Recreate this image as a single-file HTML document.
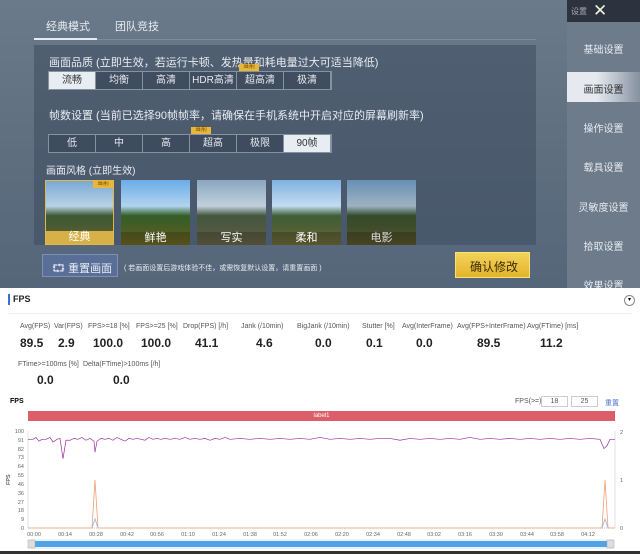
<!DOCTYPE html>
<html><head><meta charset="utf-8"><style>
*{margin:0;padding:0;box-sizing:border-box}
body{width:640px;height:554px;overflow:hidden;background:#fff;font-family:"Liberation Sans","Noto Sans CJK SC",sans-serif;position:relative}
.a{position:absolute}
.game{left:0;top:0;width:640px;height:288px;background:linear-gradient(180deg,#6b7a8a 0%,#5f6f80 50%,#56667a 100%);overflow:hidden}
.panel{left:34px;top:45px;width:502px;height:200px;background:rgba(60,75,95,0.55)}
.w{color:#e8ecf2;font-size:11px;white-space:nowrap}
.seg{display:flex;position:absolute;border:1px solid #8592a2}
.seg div{width:47px;height:17px;border-right:1px solid #8592a2;color:#e6eaf0;font-size:10px;text-align:center;line-height:17px;background:rgba(50,62,80,0.5)}
.seg div.on{background:#e8edf3;color:#333}
.tag{position:absolute;background:#e8b63a;font-size:6px;width:20px;height:7px;line-height:7px;text-align:center;color:#6b4a00}
.th{position:absolute;top:180px;width:69px;height:65px;background:linear-gradient(180deg,#7aa9d4 0%,#b9d2e5 40%,#3c5a34 55%,#4a5a32 72%,#6b6434 100%);overflow:hidden}
.th span{position:absolute;bottom:0;left:0;right:0;text-align:center;color:#fff;font-size:11px;line-height:13px;background:rgba(0,0,0,0.2)}
.side{left:567px;top:0;width:73px;height:288px;background:#6d7b8b}
.side .it{position:absolute;left:0;width:73px;text-align:center;color:#e6ebf1;font-size:10px}
.lb{font-size:7px;color:#555;white-space:nowrap}
.vl{font-size:12px;color:#222;font-weight:bold;white-space:nowrap}
</style></head><body>
<div class="a game">
  <div class="a w" style="left:46px;top:18px;font-size:11px">经典模式</div>
  <div class="a" style="left:34px;top:38px;width:63px;height:2px;background:#e6ebf1"></div>
  <div class="a w" style="left:115px;top:18px;font-size:11px">团队竞技</div>
  <div class="a" style="left:97px;top:39px;width:439px;height:1px;background:#7e8b9a"></div>
  <div class="a panel"></div>
  <div class="a w" style="left:49px;top:54px">画面品质 (立即生效，若运行卡顿、发热量和耗电量过大可适当降低)</div>
  <div class="seg" style="left:48px;top:71px"><div class="on">流畅</div><div>均衡</div><div>高清</div><div>HDR高清</div><div>超高清</div><div>极清</div></div>
  <div class="tag" style="left:239px;top:64px">当前</div>
  <div class="a w" style="left:49px;top:107px">帧数设置 (当前已选择90帧帧率，请确保在手机系统中开启对应的屏幕刷新率)</div>
  <div class="seg" style="left:48px;top:134px"><div>低</div><div>中</div><div>高</div><div>超高</div><div>极限</div><div class="on">90帧</div></div>
  <div class="tag" style="left:191px;top:127px">当前</div>
  <div class="a w" style="left:46px;top:162px;font-size:10px">画面风格 (立即生效)</div>
  <div class="th" style="left:45px;border:1px solid #e0b84a"><span style="background:#d8b048">经典</span><div class="tag" style="right:0;top:0">当前</div></div>
  <div class="th" style="left:121px;filter:saturate(1.4)"><span>鲜艳</span></div>
  <div class="th" style="left:197px;filter:saturate(0.6)"><span>写实</span></div>
  <div class="th" style="left:272px;filter:brightness(1.05)"><span>柔和</span></div>
  <div class="th" style="left:347px;filter:brightness(0.85)"><span>电影</span></div>
  <div class="a" style="left:42px;top:254px;width:76px;height:23px;background:#5a6f98;border:1px solid #7d8fb5"></div>
  <div class="a w" style="left:52px;top:260px;font-size:11px">⮔ 重置画面</div>
  <div class="a w" style="left:124px;top:263px;font-size:7px">( 若画面设置后游戏体验不佳，或需恢复默认设置，请重置画面 )</div>
  <div class="a" style="left:455px;top:252px;width:75px;height:26px;background:linear-gradient(#f3d35a,#e3b42c);border:1px solid #f7e27a"></div>
  <div class="a" style="left:470px;top:258px;font-size:12px;color:#3a2c00">确认修改</div>
  <div class="a side">
    <div class="a" style="left:0;top:0;width:73px;height:22px;background:#2c333e"></div>
    <div class="a" style="left:4px;top:6px;color:#aab;font-size:8px">设置</div>
    <div class="a" style="left:26px;top:1px;color:#f2f0e0;font-size:17px">✕</div>
    <div class="a" style="left:0;top:72px;width:73px;height:30px;background:linear-gradient(90deg,#e6eaf0 40%,rgba(230,234,240,0.2))"></div>
    <div class="it" style="top:41px">基础设置</div>
    <div class="it" style="top:81px;color:#333">画面设置</div>
    <div class="it" style="top:120px">操作设置</div>
    <div class="it" style="top:159px">载具设置</div>
    <div class="it" style="top:199px">灵敏度设置</div>
    <div class="it" style="top:238px">拾取设置</div>
    <div class="it" style="top:277px">效果设置</div>
  </div>
</div>
<div class="a" style="left:8px;top:294px;width:2px;height:11px;background:#3b6fd6"></div>
<div class="a" style="left:13px;top:294px;font-size:9px;font-weight:bold;color:#222">FPS</div>
<div class="a" style="left:624px;top:295px;width:11px;height:11px;border:1px solid #888;border-radius:50%;font-size:6px;text-align:center;line-height:9px">▾</div>
<div class="a" style="left:8px;top:313px;width:624px;height:1px;background:#eee"></div>
<div class="lb a" style="left:20px;top:323px">Avg(FPS)</div><div class="vl a" style="left:20px;top:336px">89.5</div>
<div class="lb a" style="left:54px;top:323px">Var(FPS)</div><div class="vl a" style="left:58px;top:336px">2.9</div>
<div class="lb a" style="left:88px;top:323px">FPS>=18 [%]</div><div class="vl a" style="left:93px;top:336px">100.0</div>
<div class="lb a" style="left:136px;top:323px">FPS>=25 [%]</div><div class="vl a" style="left:141px;top:336px">100.0</div>
<div class="lb a" style="left:183px;top:323px">Drop(FPS) [/h]</div><div class="vl a" style="left:195px;top:336px">41.1</div>
<div class="lb a" style="left:241px;top:323px">Jank (/10min)</div><div class="vl a" style="left:256px;top:336px">4.6</div>
<div class="lb a" style="left:297px;top:323px">BigJank (/10min)</div><div class="vl a" style="left:315px;top:336px">0.0</div>
<div class="lb a" style="left:362px;top:323px">Stutter [%]</div><div class="vl a" style="left:366px;top:336px">0.1</div>
<div class="lb a" style="left:402px;top:323px">Avg(InterFrame)</div><div class="vl a" style="left:416px;top:336px">0.0</div>
<div class="lb a" style="left:457px;top:323px">Avg(FPS+InterFrame)</div><div class="vl a" style="left:477px;top:336px">89.5</div>
<div class="lb a" style="left:527px;top:323px">Avg(FTime) [ms]</div><div class="vl a" style="left:540px;top:336px">11.2</div>
<div class="lb a" style="left:18px;top:361px">FTime>=100ms [%]</div><div class="vl a" style="left:37px;top:373px">0.0</div>
<div class="lb a" style="left:83px;top:361px">Delta(FTime)>100ms [/h]</div><div class="vl a" style="left:113px;top:373px">0.0</div>
<div class="a" style="left:10px;top:398px;font-size:7px;font-weight:bold">FPS</div>
<div class="lb a" style="left:515px;top:398px">FPS(>=)</div>
<div class="a" style="left:541px;top:396px;width:27px;height:11px;border:1px solid #ccc;font-size:7px;text-align:center;line-height:9px;color:#555">18</div>
<div class="a" style="left:571px;top:396px;width:27px;height:11px;border:1px solid #ccc;font-size:7px;text-align:center;line-height:9px;color:#555">25</div>
<div class="a" style="left:605px;top:398px;font-size:7px;color:#4a6fd0">重置</div>
<div class="a" style="left:28px;top:411px;width:587px;height:10px;background:#dc5e68;color:#fff;font-size:6px;text-align:center;line-height:10px">label1</div>
<svg class="a" style="left:0;top:425px" width="640" height="129" font-family="Liberation Sans" font-size="5.5" fill="#666">
<g text-anchor="end">
<text x="24" y="8">100</text><text x="24" y="17">91</text><text x="24" y="26">82</text><text x="24" y="34">73</text><text x="24" y="43">64</text><text x="24" y="52">55</text><text x="24" y="61">46</text><text x="24" y="70">36</text><text x="24" y="79">27</text><text x="24" y="87">18</text><text x="24" y="96">9</text><text x="24" y="105">0</text></g>
<text x="10" y="60" transform="rotate(-90 10 60)" font-weight="bold">FPS</text>
<text x="620" y="9">2</text><text x="620" y="57">1</text><text x="620" y="105">0</text>
<line x1="28" y1="6" x2="28" y2="103" stroke="#ccc" stroke-width="0.6"/>
<line x1="615" y1="6" x2="615" y2="103" stroke="#ccc" stroke-width="0.6"/>
<line x1="28" y1="103" x2="615" y2="103" stroke="#aaa" stroke-width="0.8" stroke-dasharray="1 1"/>
<g transform="translate(0,0.46) scale(1,0.924)">
<polyline fill="none" stroke="#9b2fa0" stroke-width="0.7" points="28,15 33,15 36,13 39,17 42,15 46,15 50,13 53,18 57,15 60,14 63,36 66,16 70,16 74,14 78,15 82,13 86,16 90,14 94,17 95,29 97,17 101,14 105,15 109,14 113,16 117,13 121,15 125,17 129,14 133,15 137,14 141,15 145,16 149,13 153,15 157,14 161,15 165,14 170,15 175,14 180,15 185,13 190,15 195,14 200,15 205,14 210,16 215,14 220,15 225,13 230,15 240,14 250,15 260,14 270,15 280,14 290,15 300,14 310,15 320,13 330,15 340,14 350,15 360,14 370,15 380,14 390,14 400,16 410,14 420,15 430,14 440,15 450,14 460,15 470,13 480,15 490,14 500,15 510,14 520,15 530,14 540,15 550,14 560,15 570,14 580,15 590,14 600,15 604,25 607,22 610,15 615,15"/>
<polyline fill="none" stroke="#f0a070" stroke-width="0.8" points="28,111 92,111 95,59 98,111 602,111 605,59 608,111 615,111"/>
<polyline fill="none" stroke="#9ab0e0" stroke-width="0.8" points="92,111 95,101 98,111"/>
<polyline fill="none" stroke="#9ab0e0" stroke-width="0.8" points="602,111 605,101 608,111"/>
</g>
<g text-anchor="middle" font-size="5.5">
<text x="34" y="111">00:00</text><text x="65" y="111">00:14</text><text x="96" y="111">00:28</text><text x="127" y="111">00:42</text><text x="157" y="111">00:56</text><text x="188" y="111">01:10</text><text x="219" y="111">01:24</text><text x="250" y="111">01:38</text><text x="280" y="111">01:52</text><text x="311" y="111">02:06</text><text x="342" y="111">02:20</text><text x="373" y="111">02:34</text><text x="404" y="111">02:48</text><text x="434" y="111">03:02</text><text x="465" y="111">03:16</text><text x="496" y="111">03:30</text><text x="527" y="111">03:44</text><text x="557" y="111">03:58</text><text x="588" y="111">04:12</text></g>
<rect x="30" y="114" width="583" height="10" fill="#eef2f8"/>
<rect x="32" y="116" width="579" height="6" fill="#4fa3e8"/>
<rect x="28" y="115" width="7" height="8" fill="#ddd" stroke="#aaa" stroke-width="0.5"/>
<rect x="607" y="115" width="7" height="8" fill="#ddd" stroke="#aaa" stroke-width="0.5"/>
<rect x="0" y="126" width="640" height="3" fill="#333"/>
</svg>
</body></html>
